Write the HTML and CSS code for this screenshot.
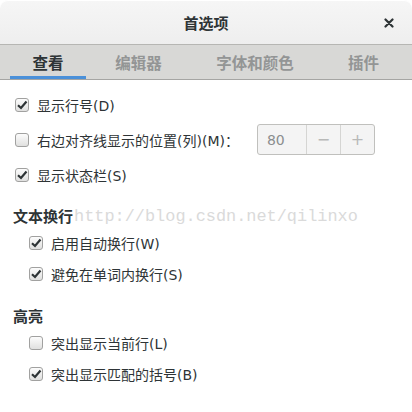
FILE: index.html
```html
<!DOCTYPE html>
<html>
<head>
<meta charset="utf-8">
<link rel="stylesheet" href="styles.css">
</head>
<body>
<div class="window">
  <div class="titlebar">
    <span class="title">首选项</span>
    <span class="close">
      <svg width="10" height="10" viewBox="0 0 10 10"><path d="M1.5 1.5 L8.5 8.5 M8.5 1.5 L1.5 8.5" stroke="#2e3436" stroke-width="2.2" stroke-linecap="round"/></svg>
    </span>
  </div>
  <div class="tabs">
    <div class="tab active">查看</div>
    <div class="tab">编辑器</div>
    <div class="tab">字体和颜色</div>
    <div class="tab">插件</div>
  </div>
  <div class="content">
    <div class="row">
      <span class="cb checked"><svg viewBox="0 0 14 14"><path d="M3 7.2 L6 10 L11.5 3.5" fill="none" stroke="#2e3436" stroke-width="2.2"/></svg></span>
      <span>显示行号(D)</span>
    </div>
    <div class="row">
      <span class="cb"></span>
      <span>右边对齐线显示的位置(列)(M)：</span>
      <div class="spin">
        <span class="spin-val">80</span>
        <span class="spin-btn">−</span>
        <span class="spin-btn">+</span>
      </div>
    </div>
    <div class="row">
      <span class="cb checked"><svg viewBox="0 0 14 14"><path d="M3 7.2 L6 10 L11.5 3.5" fill="none" stroke="#2e3436" stroke-width="2.2"/></svg></span>
      <span>显示状态栏(S)</span>
    </div>

    <div class="heading">文本换行<span class="wm">http://blog.csdn.net/qilinxo</span></div>
    <div class="row indent">
      <span class="cb checked"><svg viewBox="0 0 14 14"><path d="M3 7.2 L6 10 L11.5 3.5" fill="none" stroke="#2e3436" stroke-width="2.2"/></svg></span>
      <span>启用自动换行(W)</span>
    </div>
    <div class="row indent">
      <span class="cb checked"><svg viewBox="0 0 14 14"><path d="M3 7.2 L6 10 L11.5 3.5" fill="none" stroke="#2e3436" stroke-width="2.2"/></svg></span>
      <span>避免在单词内换行(S)</span>
    </div>

    <div class="heading h2">高亮</div>
    <div class="row indent">
      <span class="cb"></span>
      <span>突出显示当前行(L)</span>
    </div>
    <div class="row indent">
      <span class="cb checked"><svg viewBox="0 0 14 14"><path d="M3 7.2 L6 10 L11.5 3.5" fill="none" stroke="#2e3436" stroke-width="2.2"/></svg></span>
      <span>突出显示匹配的括号(B)</span>
    </div>
  </div>
</div>
</body>
</html>
```

FILE: styles.css
```css
html, body {
  margin: 0;
  padding: 0;
  background: #ffffff;
}
body {
  width: 412px;
  height: 412px;
  overflow: hidden;
  font-family: "DejaVu Sans", "Noto Sans CJK SC", sans-serif;
  font-size: 14px;
  color: #2e3436;
}
.window {
  width: 412px;
  height: 412px;
  background: #fff;
  border-radius: 8px 8px 0 0;
  overflow: hidden;
}
.titlebar {
  height: 45px;
  box-sizing: border-box;
  background: linear-gradient(#f6f6f6, #eeeeee);
  border-bottom: 1px solid #b6b6b3;
  display: flex;
  align-items: center;
  justify-content: center;
  position: relative;
  border-radius: 8px 8px 0 0;
  box-shadow: inset 0 1px 0 #ffffff;
}
.title {
  font-family: "Noto Sans CJK SC", sans-serif;
  font-weight: bold;
  font-size: 15px;
  color: #2e3436;
}
.close {
  position: absolute;
  right: 18px;
  top: 18px;
  width: 10px;
  height: 10px;
  display: flex;
}
.tabs {
  height: 35px;
  box-sizing: border-box;
  background: #d8d8d6;
  border-bottom: 1px solid #a5a5a3;
  display: flex;
  padding: 0 4px 0 10px;
}
.tab {
  display: flex;
  align-items: center;
  justify-content: center;
  font-family: "Noto Sans CJK SC", sans-serif;
  font-weight: bold;
  font-size: 15.5px;
  color: #939595;
  box-sizing: border-box;
  border-bottom: 3px solid transparent;
  padding-top: 2px;
}
.tab:nth-child(1) { flex: 0 0 76px; }
.tab:nth-child(2) { flex: 0 0 105px; }
.tab:nth-child(3) { flex: 0 0 128px; }
.tab:nth-child(4) { flex: 1; }
.tab.active {
  color: #2e3436;
  border-bottom-color: #4a90d9;
}
.content {
  padding: 7px 0 0 15px;
}
.row {
  display: flex;
  align-items: center;
  height: 35px;
  gap: 8px;
}
.row span {
  white-space: nowrap;
}
.cb {
  width: 12px;
  height: 12px;
  border: 1px solid #a1a1a0;
  border-radius: 3px;
  background: linear-gradient(#fcfcfc, #e0e0df);
  display: flex;
  flex: none;
}
.cb svg {
  width: 14px;
  height: 14px;
  margin: -1px;
}
.spin {
  margin-left: 10px;
  width: 118px;
  height: 31px;
  flex: none;
  box-sizing: border-box;
  border: 1px solid #c0c0bd;
  border-radius: 3px;
  background: #f4f4f4;
  display: flex;
}
.spin-val {
  flex: 1;
  display: flex;
  align-items: center;
  padding-left: 9px;
  color: #8b8e8f;
  font-family: "DejaVu Sans", sans-serif;
  font-size: 14px;
}
.spin-btn {
  width: 33px;
  border-left: 1px solid #d5d5d3;
  display: flex;
  align-items: center;
  justify-content: center;
  color: #b8b9b8;
  font-size: 16px;
}
.heading {
  font-family: "Noto Sans CJK SC", sans-serif;
  font-weight: bold;
  font-size: 15px;
  margin-left: -2px;
  margin-top: 13px;
  margin-bottom: 2px;
  height: 20px;
  display: flex;
  align-items: center;
  white-space: nowrap;
}
.h2 {
  margin-top: 16px;
}
.wm {
  font-family: "Liberation Mono", monospace;
  font-weight: normal;
  font-size: 16.9px;
  color: #dadada;
  margin-top: 2px;
  margin-left: 1px;
}
.indent {
  padding-left: 14px;
  height: 31px;
}
```
